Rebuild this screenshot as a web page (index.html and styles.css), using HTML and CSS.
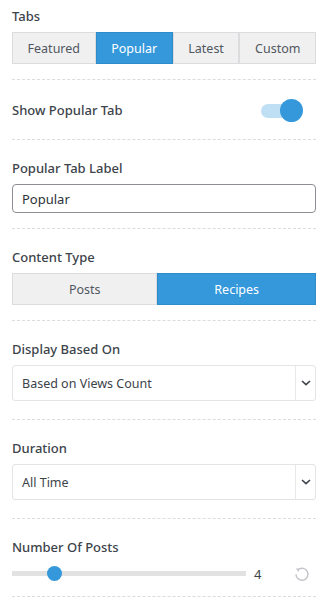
FILE: index.html
```html
<!DOCTYPE html>
<html>
<head>
<meta charset="utf-8">
<link rel="stylesheet" href="styles.css">
</head>
<body>
<div class="panel">
  <div class="section first">
    <div class="label">Tabs</div>
    <div class="btn-group">
      <div class="btn">Featured</div>
      <div class="btn active">Popular</div>
      <div class="btn">Latest</div>
      <div class="btn">Custom</div>
    </div>
  </div>

  <div class="section toggle-section">
    <div class="toggle-row">
      <div class="label nomargin">Show Popular Tab</div>
      <div class="toggle"><div class="toggle-track"></div><div class="toggle-knob"></div></div>
    </div>
  </div>

  <div class="section">
    <div class="label">Popular Tab Label</div>
    <div class="text-input">Popular</div>
  </div>

  <div class="section">
    <div class="label">Content Type</div>
    <div class="btn-group tall">
      <div class="btn">Posts</div>
      <div class="btn active">Recipes</div>
    </div>
  </div>

  <div class="section select-section">
    <div class="label">Display Based On</div>
    <div class="select">
      <div class="select-value">Based on Views Count</div>
      <div class="select-arrow"><svg width="10" height="6" viewBox="0 0 10 6"><path d="M1 1 L5 4.6 L9 1" fill="none" stroke="#3c434a" stroke-width="1.6"/></svg></div>
    </div>
  </div>

  <div class="section select-section">
    <div class="label">Duration</div>
    <div class="select">
      <div class="select-value">All Time</div>
      <div class="select-arrow"><svg width="10" height="6" viewBox="0 0 10 6"><path d="M1 1 L5 4.6 L9 1" fill="none" stroke="#3c434a" stroke-width="1.6"/></svg></div>
    </div>
  </div>

  <div class="section slider-section">
    <div class="label">Number Of Posts</div>
    <div class="slider-row">
      <div class="slider-track"><div class="slider-knob"></div></div>
      <div class="slider-value">4</div>
      <div class="reset"><svg width="16" height="16" viewBox="0 0 16 16"><path d="M4.2 3.6 A6 6 0 1 1 2 8.2" fill="none" stroke="#c3c4c7" stroke-width="1.4"/><path d="M1.8 2.6 L5.6 2.4 L4.6 6 Z" fill="#c3c4c7"/></svg></div>
    </div>
  </div>
</div>
</body>
</html>
```

FILE: styles.css
```css
* { box-sizing: border-box; }
html, body { margin: 0; padding: 0; background: #fff; }
body { font-family: "Noto Sans", "Open Sans", sans-serif; color: #3c434a; }

.panel { padding: 0 11px 0 12px; }

.section {
  border-top: 1px dashed #dcdcde;
  padding: 19px 0 15px;
}
.section.first { border-top: none; padding-top: 7px; }
.section.toggle-section { padding: 19px 0 18px; }
.section.select-section { padding-bottom: 18px; }
.section.slider-section { padding-bottom: 12px; border-bottom: 1px dashed #dcdcde; }

.label {
  font-size: 13px;
  font-weight: 500;
  line-height: 18px;
  height: 18px;
  margin-bottom: 7px;
  color: #3c434a;
}
.label.nomargin { margin-bottom: 0; }

.btn-group { display: flex; height: 32px; }
.btn {
  flex: 1 1 auto;
  display: flex;
  align-items: center;
  justify-content: center;
  background: #f0f0f1;
  border: 1px solid #dcdcde;
  font-size: 12.5px;
  color: #50575e;
}
.btn.active {
  background: #3498db;
  border-color: #2f8ccb;
  color: #fff;
}

.toggle-row {
  display: flex;
  align-items: center;
  justify-content: space-between;
  height: 22px;
}
.toggle {
  position: relative;
  width: 42px;
  height: 23px;
  margin-right: 13px;
}
.toggle-track {
  position: absolute;
  left: 0; top: 5px;
  width: 36px; height: 14px;
  border-radius: 7px;
  background: #bfdff5;
}
.toggle-knob {
  position: absolute;
  right: 0; top: 0;
  width: 23px; height: 23px;
  border-radius: 50%;
  background: #3498db;
}

.text-input {
  height: 29px;
  border: 1px solid #8c8f94;
  border-radius: 4px;
  padding: 0 9px;
  display: flex;
  align-items: center;
  font-size: 13px;
  color: #2c3338;
}

.select {
  display: flex;
  height: 36px;
  border: 1px solid #e2e4e7;
  border-radius: 3px;
  background: #fff;
}
.select-value {
  flex: 1;
  display: flex;
  align-items: center;
  padding-left: 9px;
  font-size: 12.5px;
  color: #3c434a;
  border-right: 1px solid #e8e8e8;
}
.select-arrow {
  width: 19px;
  display: flex;
  align-items: center;
  justify-content: center;
}

.slider-row {
  display: flex;
  align-items: center;
  height: 21px;
}
.slider-track {
  position: relative;
  width: 234px;
  height: 5px;
  background: #e2e2e2;
}
.slider-knob {
  position: absolute;
  left: 35px; top: -5px;
  width: 15px; height: 15px;
  border-radius: 50%;
  background: #3498db;
}
.slider-value {
  width: 45px;
  padding-left: 8px;
  font-size: 13px;
  color: #3c434a;
}
.reset { width: 16px; height: 16px; margin-left: 3px; }
.reset svg { display: block; }
```
